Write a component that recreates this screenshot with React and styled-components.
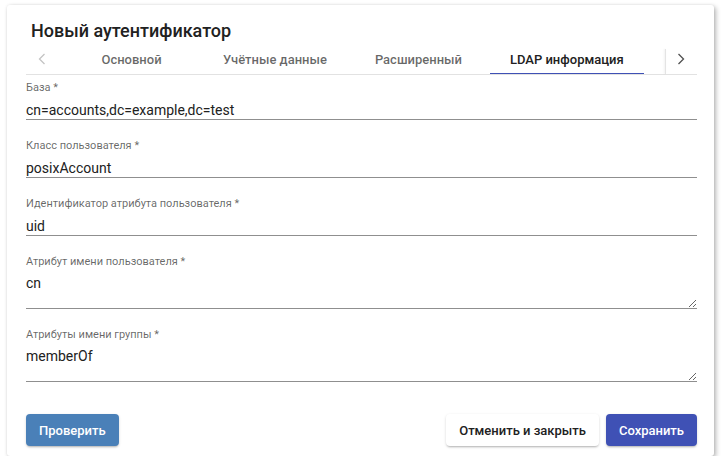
import React from "react";
import styled, { createGlobalStyle } from "styled-components";

const GlobalStyle = createGlobalStyle`
  html, body {
    margin: 0;
    background: #fff;
    font-family: Roboto, "Noto Sans", "Liberation Sans", sans-serif;
  }
`;

const Page = styled.div`
  padding: 5px 0 0 7px;
`;

const Dialog = styled.div`
  width: 707px;
  box-sizing: border-box;
  padding: 14px 17px 10px 19px;
  background: #fff;
  border-radius: 3px;
  box-shadow: 2px 2px 5px rgba(0, 0, 0, 0.28), 0 0 3px rgba(0, 0, 0, 0.08);
`;

const Title = styled.h2`
  margin: 0 0 0 5px;
  font-size: 18px;
  line-height: 24px;
  font-weight: 500;
  color: #212121;
`;

const TabHeader = styled.div`
  display: flex;
  height: 31px;
  margin-top: 1px;
  border-bottom: 1px solid #e2e2e2;
  box-sizing: border-box;
`;

const Pager = styled.div`
  position: relative;
  flex: 0 0 32px;
  display: flex;
  align-items: center;
  justify-content: center;
  color: ${(p) => (p.disabled ? "#c4c4c4" : "#505050")};
  ${(p) =>
    p.separator &&
    `
    &::before {
      content: "";
      position: absolute;
      left: 0;
      top: 5px;
      bottom: 0;
      width: 1px;
      background: #e4e4e4;
      box-shadow: -1px 0 2px rgba(0, 0, 0, 0.08);
    }
  `}
`;

const TabList = styled.div`
  flex: 1;
  display: flex;
  padding-left: 2px;
  overflow: hidden;
`;

const Tab = styled.div`
  position: relative;
  min-width: 143px;
  padding: 0 20px;
  box-sizing: border-box;
  display: flex;
  align-items: center;
  justify-content: center;
  white-space: nowrap;
  font-size: 13px;
  font-weight: 500;
  color: ${(p) => (p.active ? "#212121" : "rgba(0, 0, 0, 0.6)")};
  ${(p) =>
    p.active &&
    `
    &::after {
      content: "";
      position: absolute;
      left: 0;
      right: 0;
      bottom: -1px;
      height: 2px;
      background: #3f51b5;
    }
  `}
`;

const Fields = styled.div`
  display: flex;
  flex-direction: column;
  gap: 19px;
  padding-top: 6px;
`;

const Field = styled.label`
  display: block;
`;

const Label = styled.span`
  display: block;
  font-size: 11px;
  line-height: 14px;
  color: rgba(0, 0, 0, 0.6);
`;

const Input = styled.input`
  display: block;
  width: 100%;
  box-sizing: content-box;
  height: 18px;
  padding: 6px 0 0;
  margin: 0;
  border: none;
  border-bottom: 1px solid #8f8f8f;
  outline: none;
  background: transparent;
  font: 400 14px/16px Roboto, "Noto Sans", sans-serif;
  color: #212121;
`;

const TextArea = styled.textarea`
  display: block;
  width: 100%;
  box-sizing: border-box;
  height: 40px;
  padding: 6px 0 0;
  margin: 0;
  border: none;
  border-bottom: 1px solid #8f8f8f;
  outline: none;
  resize: vertical;
  background: transparent;
  font: 400 14px/16px Roboto, "Noto Sans", sans-serif;
  color: #212121;
`;

const Actions = styled.div`
  display: flex;
  align-items: center;
  gap: 7px;
  margin-top: 32px;
`;

const Spacer = styled.div`
  flex: 1;
`;

const Button = styled.button`
  height: 32px;
  padding: 0 13px;
  border: none;
  border-radius: 4px;
  font: 500 13px Roboto, "Noto Sans", sans-serif;
  cursor: pointer;
  color: ${(p) => (p.variant === "plain" ? "#212121" : "#fff")};
  background: ${(p) =>
    p.variant === "primary" ? "#3f51b5" : p.variant === "info" ? "#4a80b8" : "#fff"};
  box-shadow: 0 2px 2px -1px rgba(0, 0, 0, 0.2), 0 1px 3px rgba(0, 0, 0, 0.14);
`;

const Chevron = ({ dir }) => (
  <svg width="8" height="12" viewBox="0 0 8 12">
    <polyline
      points={dir === "left" ? "6.5,1 1.5,6 6.5,11" : "1.5,1 6.5,6 1.5,11"}
      fill="none"
      stroke="currentColor"
      strokeWidth="1.3"
    />
  </svg>
);

const tabs = ["Основной", "Учётные данные", "Расширенный", "LDAP информация"];

const fields = [
  { label: "База *", value: "cn=accounts,dc=example,dc=test" },
  { label: "Класс пользователя *", value: "posixAccount" },
  { label: "Идентификатор атрибута пользователя *", value: "uid" },
  { label: "Атрибут имени пользователя *", value: "cn", multiline: true },
  { label: "Атрибуты имени группы *", value: "memberOf", multiline: true },
];

export default function App() {
  return (
    <Page>
      <GlobalStyle />
      <Dialog>
        <Title>Новый аутентификатор</Title>
        <TabHeader>
          <Pager disabled>
            <Chevron dir="left" />
          </Pager>
          <TabList>
            {tabs.map((t, i) => (
              <Tab key={t} active={i === 3}>
                {t}
              </Tab>
            ))}
          </TabList>
          <Pager separator>
            <Chevron dir="right" />
          </Pager>
        </TabHeader>
        <Fields>
          {fields.map((f) => (
            <Field key={f.label}>
              <Label>{f.label}</Label>
              {f.multiline ? (
                <TextArea defaultValue={f.value} />
              ) : (
                <Input defaultValue={f.value} />
              )}
            </Field>
          ))}
        </Fields>
        <Actions>
          <Button variant="info">Проверить</Button>
          <Spacer />
          <Button variant="plain">Отменить и закрыть</Button>
          <Button variant="primary">Сохранить</Button>
        </Actions>
      </Dialog>
    </Page>
  );
}
